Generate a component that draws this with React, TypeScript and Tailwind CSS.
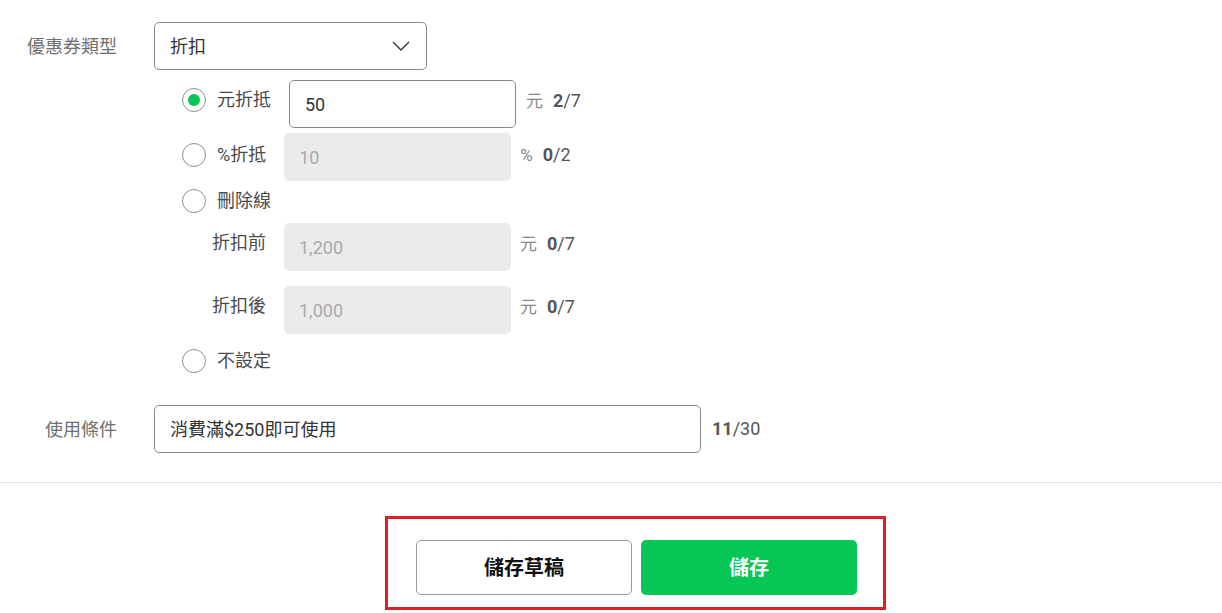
import React from "react";

const FONT = "font-['Roboto','Noto_Sans_CJK_TC',sans-serif]";

function Radio({ checked }: { checked?: boolean }) {
  return (
    <span className="flex h-[24px] w-[24px] shrink-0 items-center justify-center rounded-full border border-[#8f8f8f] bg-white">
      {checked && <span className="h-[12px] w-[12px] rounded-full bg-[#06c755]" />}
    </span>
  );
}

function Counter({ unit, cur, max }: { unit?: string; cur: string; max: string }) {
  return (
    <div className="flex items-center whitespace-nowrap text-[18px] leading-[24px]">
      {unit && <span className="mr-[10px] text-[#888] text-[17px]">{unit}</span>}
      <span className="font-bold text-[#555]">{cur}</span>
      <span className="text-[#555]">/{max}</span>
    </div>
  );
}

function GrayInput({ value }: { value: string }) {
  return (
    <div className="flex h-[48px] w-[227px] shrink-0 items-center rounded-[5px] bg-[#ebebeb] pl-[15px] text-[18px] text-[#aaa]">
      {value}
    </div>
  );
}

export default function App() {
  return (
    <div className={`h-[613px] w-full overflow-hidden bg-white ${FONT}`}>
      <div className="pt-[22px]">
        {/* coupon type */}
        <div className="flex items-center">
          <div className="w-[117px] shrink-0 whitespace-nowrap text-right text-[18px] text-[#707070]">優惠券類型</div>
          <div className="ml-[37px] flex h-[48px] w-[273px] items-center justify-between rounded-[5px] border border-[#8a8a8a] pl-[15px] pr-[16px] text-[18px] text-[#333]">
            <span>折扣</span>
            <svg width="18" height="10" viewBox="0 0 18 10" fill="none">
              <polyline points="1,1 9,9 17,1" stroke="#333" strokeWidth="1.4" />
            </svg>
          </div>
        </div>

        {/* radios */}
        <div className="ml-[182px] mt-[10px] flex flex-col whitespace-nowrap text-[18px] text-[#4a4a4a]">
          <div className="flex items-start">
            <div className="flex shrink-0 items-center pt-[8px]">
              <Radio checked />
              <span className="ml-[11px] leading-[24px]">元折抵</span>
            </div>
            <div className="ml-[18px] flex h-[48px] w-[227px] shrink-0 items-center rounded-[5px] border border-[#8a8a8a] pl-[15px] text-[18px] text-[#333]">
              50
            </div>
            <div className="ml-[10px] pt-[9px]">
              <Counter unit="元" cur="2" max="7" />
            </div>
          </div>

          <div className="mt-[5px] flex items-start">
            <div className="flex shrink-0 items-center pt-[10px]">
              <Radio />
              <span className="ml-[11px] leading-[24px]">%折抵</span>
            </div>
            <div className="ml-[18px]">
              <GrayInput value="10" />
            </div>
            <div className="ml-[9px] pt-[10px]">
              <Counter unit="%" cur="0" max="2" />
            </div>
          </div>

          <div className="mt-[8px] flex items-center">
            <Radio />
            <span className="ml-[11px] leading-[24px]">刪除線</span>
          </div>

          <div className="ml-[30px] mt-[10px] flex items-start">
            <span className="w-[54px] shrink-0 pt-[8px] leading-[24px]">折扣前</span>
            <div className="ml-[18px]">
              <GrayInput value="1,200" />
            </div>
            <div className="ml-[9px] pt-[9px]">
              <Counter unit="元" cur="0" max="7" />
            </div>
          </div>

          <div className="ml-[30px] mt-[15px] flex items-start">
            <span className="w-[54px] shrink-0 pt-[8px] leading-[24px]">折扣後</span>
            <div className="ml-[18px]">
              <GrayInput value="1,000" />
            </div>
            <div className="ml-[9px] pt-[9px]">
              <Counter unit="元" cur="0" max="7" />
            </div>
          </div>

          <div className="mt-[15px] flex items-center">
            <Radio />
            <span className="ml-[11px] leading-[24px]">不設定</span>
          </div>
        </div>

        {/* usage condition */}
        <div className="mt-[32px] flex items-center">
          <div className="w-[117px] shrink-0 whitespace-nowrap text-right text-[18px] text-[#707070]">使用條件</div>
          <div className="ml-[37px] flex h-[48px] w-[547px] items-center rounded-[5px] border border-[#8a8a8a] pl-[15px] text-[18px] text-[#333]">
            消費滿$250即可使用
          </div>
          <div className="ml-[11px]">
            <Counter cur="11" max="30" />
          </div>
        </div>

        <div className="mt-[29px] h-px w-full bg-[#e3e3e3]" />

        {/* buttons */}
        <div className="ml-[385px] mt-[33px] inline-flex border-[3px] border-[#e01e25] pb-[12px] pl-[28px] pr-[26px] pt-[21px]">
          <div className="flex gap-[9px]">
            <button className="flex h-[55px] w-[216px] items-center justify-center rounded-[5px] border border-[#9a9a9a] bg-white text-[20px] font-bold text-[#111]">
              儲存草稿
            </button>
            <button className="flex h-[55px] w-[216px] items-center justify-center rounded-[5px] bg-[#06c755] text-[20px] font-bold text-white">
              儲存
            </button>
          </div>
        </div>
      </div>
    </div>
  );
}
